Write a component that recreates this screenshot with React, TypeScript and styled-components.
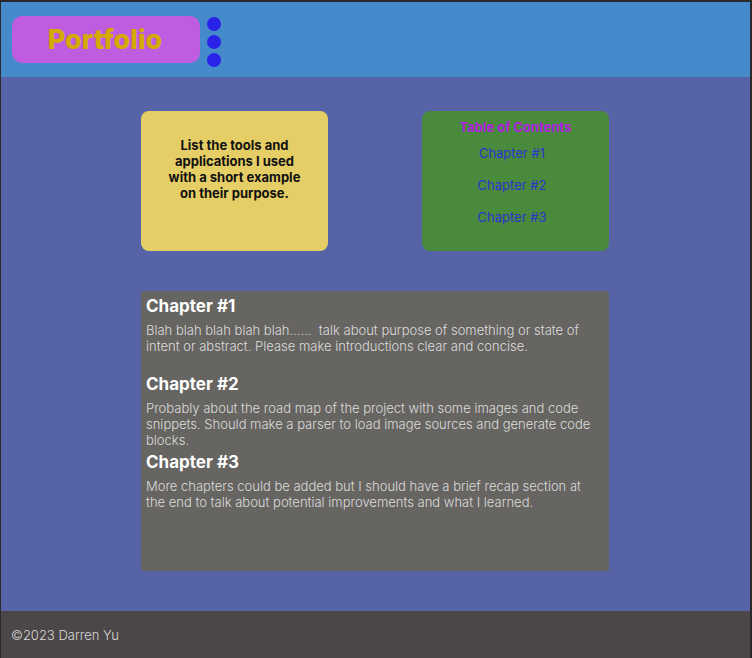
import React from "react";
import styled, { createGlobalStyle } from "styled-components";

const Global = createGlobalStyle`
  html, body { margin: 0; padding: 0; background: #2a2a2a; }
  body { font-family: Inter, "Noto Sans", sans-serif; }
  #root { padding: 2px 2px 0 1px; }
`;

const Page = styled.div`
  display: flex;
  flex-direction: column;
  height: 656px;
  background: #5763a7;
`;

const Header = styled.header`
  height: 75px;
  background: #458bcb;
  display: flex;
  align-items: flex-start;
  padding-left: 11px;
  gap: 7px;
  box-sizing: border-box;
`;

const Pill = styled.div`
  width: 188px;
  height: 47px;
  margin-top: 14px;
  border-radius: 10px;
  background: #bf5ce0;
  display: flex;
  align-items: center;
  justify-content: center;
  padding-right: 2px;
  box-sizing: border-box;
  color: #d4a900;
  font-weight: 800;
  font-size: 27px;
`;

const Dots = styled.div`
  display: flex;
  flex-direction: column;
  gap: 4px;
  margin-top: 15px;
`;

const Dot = styled.span`
  width: 14px;
  height: 14px;
  border-radius: 50%;
  background: #2a22e8;
`;

const Main = styled.main`
  flex: 1;
  display: flex;
  flex-direction: column;
  align-items: center;
  padding: 34px 1px 0 0;
  gap: 40px;
`;

const Row = styled.div`
  width: 468px;
  display: flex;
  justify-content: space-between;
`;

const Card = styled.div<{ $bg: string }>`
  width: 187px;
  height: 140px;
  border-radius: 8px;
  background: ${(p) => p.$bg};
  box-sizing: border-box;
  display: flex;
  flex-direction: column;
  align-items: center;
`;

const Intro = styled.p`
  margin: 26px 0 0;
  width: 140px;
  text-align: center;
  font-weight: 700;
  font-size: 13px;
  line-height: 16px;
  color: #111;
`;

const TocTitle = styled.div`
  margin-top: 8px;
  font-weight: 700;
  font-size: 13px;
  line-height: 16px;
  color: #b01fe0;
`;

const TocList = styled.div`
  display: flex;
  flex-direction: column;
  align-items: center;
  gap: 16px;
  margin-top: 10px;
  padding-right: 7px;
`;

const TocLink = styled.a`
  font-size: 13px;
  line-height: 16px;
  color: #2b34cc;
  text-decoration: none;
`;

const Article = styled.article`
  width: 468px;
  height: 280px;
  background: #676562;
  border-radius: 3px;
  box-sizing: border-box;
  padding: 5px 0 0 5px;
`;

const Section = styled.section`
  height: 78px;
`;

const ChapterTitle = styled.h2`
  margin: 0;
  font-size: 17px;
  line-height: 20px;
  font-weight: 700;
  color: #fff;
`;

const Body = styled.p<{ $w: number }>`
  margin: 6px 0 0;
  width: ${(p) => p.$w}px;
  font-size: 13px;
  line-height: 16px;
  font-weight: 300;
  color: #dcdcdc;
  white-space: pre-wrap;
`;

const Footer = styled.footer`
  height: 47px;
  background: #4b4647;
  display: flex;
  align-items: center;
  padding-left: 10px;
  color: #d8d8d8;
  font-size: 13px;
  font-weight: 300;
`;

const chapters = [
  {
    title: "Chapter #1",
    text: "Blah blah blah blah blah......  talk about purpose of something or state of intent or abstract. Please make introductions clear and concise.",
    w: 463,
  },
  {
    title: "Chapter #2",
    text: "Probably about the road map of the project with some images and code snippets. Should make a parser to load image sources and generate code blocks.",
    w: 463,
  },
  {
    title: "Chapter #3",
    text: "More chapters could be added but I should have a brief recap section at the end to talk about potential improvements and what I learned.",
    w: 450,
  },
];

export default function App() {
  return (
    <>
      <Global />
      <Page>
        <Header>
          <Pill>Portfolio</Pill>
          <Dots>
            <Dot />
            <Dot />
            <Dot />
          </Dots>
        </Header>
        <Main>
          <Row>
            <Card $bg="#e6ce66">
              <Intro>
                List the tools and applications I used with a short example on their purpose.
              </Intro>
            </Card>
            <Card $bg="#4a8a3c">
              <TocTitle>Table of Contents</TocTitle>
              <TocList>
                {chapters.map((c) => (
                  <TocLink key={c.title}>{c.title}</TocLink>
                ))}
              </TocList>
            </Card>
          </Row>
          <Article>
            {chapters.map((c) => (
              <Section key={c.title}>
                <ChapterTitle>{c.title}</ChapterTitle>
                <Body $w={c.w}>{c.text}</Body>
              </Section>
            ))}
          </Article>
        </Main>
        <Footer>©2023 Darren Yu</Footer>
      </Page>
    </>
  );
}
